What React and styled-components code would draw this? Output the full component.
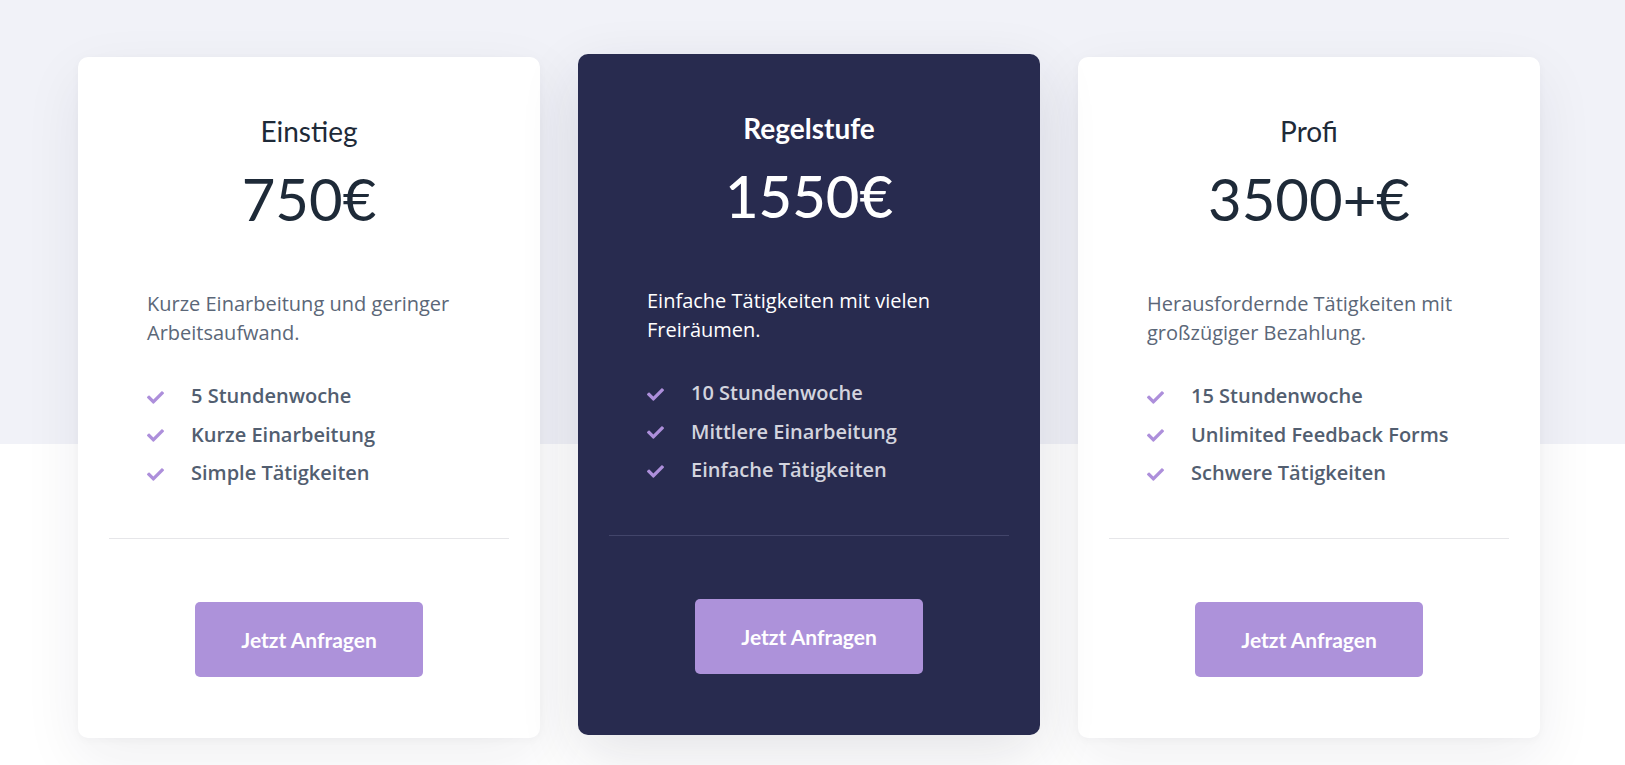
import React from "react";
import styled, { createGlobalStyle, css } from "styled-components";
import { FaCheck } from "react-icons/fa";

const Global = createGlobalStyle`
  html, body { margin: 0; padding: 0; }
  body {
    background: #ffffff;
    font-family: "Open Sans", "Liberation Sans", sans-serif;
    -webkit-font-smoothing: antialiased;
  }
`;

const Page = styled.section`
  min-height: 765px;
  background: linear-gradient(to bottom, #f1f2f8 0, #f1f2f8 444px, #ffffff 444px);
  overflow: hidden;
`;

const Grid = styled.div`
  display: grid;
  grid-template-columns: repeat(3, 462px);
  column-gap: 38px;
  padding: 57px 0 40px 78px;
  align-items: start;
`;

const Card = styled.article`
  display: flex;
  flex-direction: column;
  align-items: stretch;
  box-sizing: border-box;
  height: 681px;
  padding: 57px 31px 61px;
  border-radius: 10px;
  background: #ffffff;
  box-shadow: 0 20px 60px rgba(30, 35, 60, 0.07), 0 2px 10px rgba(30, 35, 60, 0.03);
  ${(p) =>
    p.$featured &&
    css`
      background: #282b4f;
      transform: translateY(-3px);
      box-shadow: 0 20px 60px rgba(30, 35, 60, 0.12);
    `}
`;

const Title = styled.h3`
  margin: 0;
  text-align: center;
  font-family: Lato, "Liberation Sans", sans-serif;
  font-size: 28px;
  line-height: 34px;
  font-weight: ${(p) => (p.$featured ? 700 : 400)};
  color: ${(p) => (p.$featured ? "#ffffff" : "#1e2a38")};
`;

const Price = styled.div`
  margin-top: 20px;
  height: 62px;
  text-align: center;
  font-family: Lato, "Liberation Sans", sans-serif;
  font-size: 58px;
  line-height: 62px;
  font-weight: ${(p) => (p.$featured ? 500 : 400)};
  color: ${(p) => (p.$featured ? "#ffffff" : "#1e2a38")};
`;

const Body = styled.div`
  padding: 0 38px;
`;

const Description = styled.p`
  margin: 59px 0 0;
  font-size: 20px;
  line-height: 29px;
  color: ${(p) => (p.$featured ? "#ffffff" : "#5b6778")};
`;

const Features = styled.ul`
  list-style: none;
  margin: 30px 0 0;
  padding: 0;
`;

const Feature = styled.li`
  display: flex;
  align-items: center;
  gap: 27px;
  font-size: 20px;
  line-height: 38.5px;
  font-weight: 600;
  color: ${(p) => (p.$featured ? "#d3d4de" : "#525e70")};
`;

const Check = styled(FaCheck)`
  flex: none;
  width: 17px;
  height: 17px;
  color: #ad8fdb;
  margin-top: 2px;
`;

const Divider = styled.hr`
  margin: auto 0 0;
  border: 0;
  height: 1px;
  background: ${(p) => (p.$featured ? "#42456a" : "#e6e6e9")};
`;

const Button = styled.button`
  align-self: center;
  margin-top: 63px;
  width: 228px;
  height: 75px;
  border: 0;
  border-radius: 5px;
  background: #ad92da;
  color: #ffffff;
  font-family: Lato, "Liberation Sans", sans-serif;
  font-size: 21px;
  font-weight: 700;
  cursor: pointer;
`;

const plans = [
  {
    title: "Einstieg",
    price: "750€",
    desc: "Kurze Einarbeitung und geringer Arbeitsaufwand.",
    features: ["5 Stundenwoche", "Kurze Einarbeitung", "Simple Tätigkeiten"],
  },
  {
    title: "Regelstufe",
    price: "1550€",
    featured: true,
    desc: "Einfache Tätigkeiten mit vielen Freiräumen.",
    features: ["10 Stundenwoche", "Mittlere Einarbeitung", "Einfache Tätigkeiten"],
  },
  {
    title: "Profi",
    price: "3500+€",
    desc: "Herausfordernde Tätigkeiten mit großzügiger Bezahlung.",
    features: ["15 Stundenwoche", "Unlimited Feedback Forms", "Schwere Tätigkeiten"],
  },
];

export default function App() {
  return (
    <>
      <Global />
      <Page>
        <Grid>
          {plans.map((p) => (
            <Card key={p.title} $featured={p.featured}>
              <Title $featured={p.featured}>{p.title}</Title>
              <Price $featured={p.featured}>{p.price}</Price>
              <Body>
                <Description $featured={p.featured}>{p.desc}</Description>
                <Features>
                  {p.features.map((f) => (
                    <Feature key={f} $featured={p.featured}>
                      <Check />
                      {f}
                    </Feature>
                  ))}
                </Features>
              </Body>
              <Divider $featured={p.featured} />
              <Button>Jetzt Anfragen</Button>
            </Card>
          ))}
        </Grid>
      </Page>
    </>
  );
}
